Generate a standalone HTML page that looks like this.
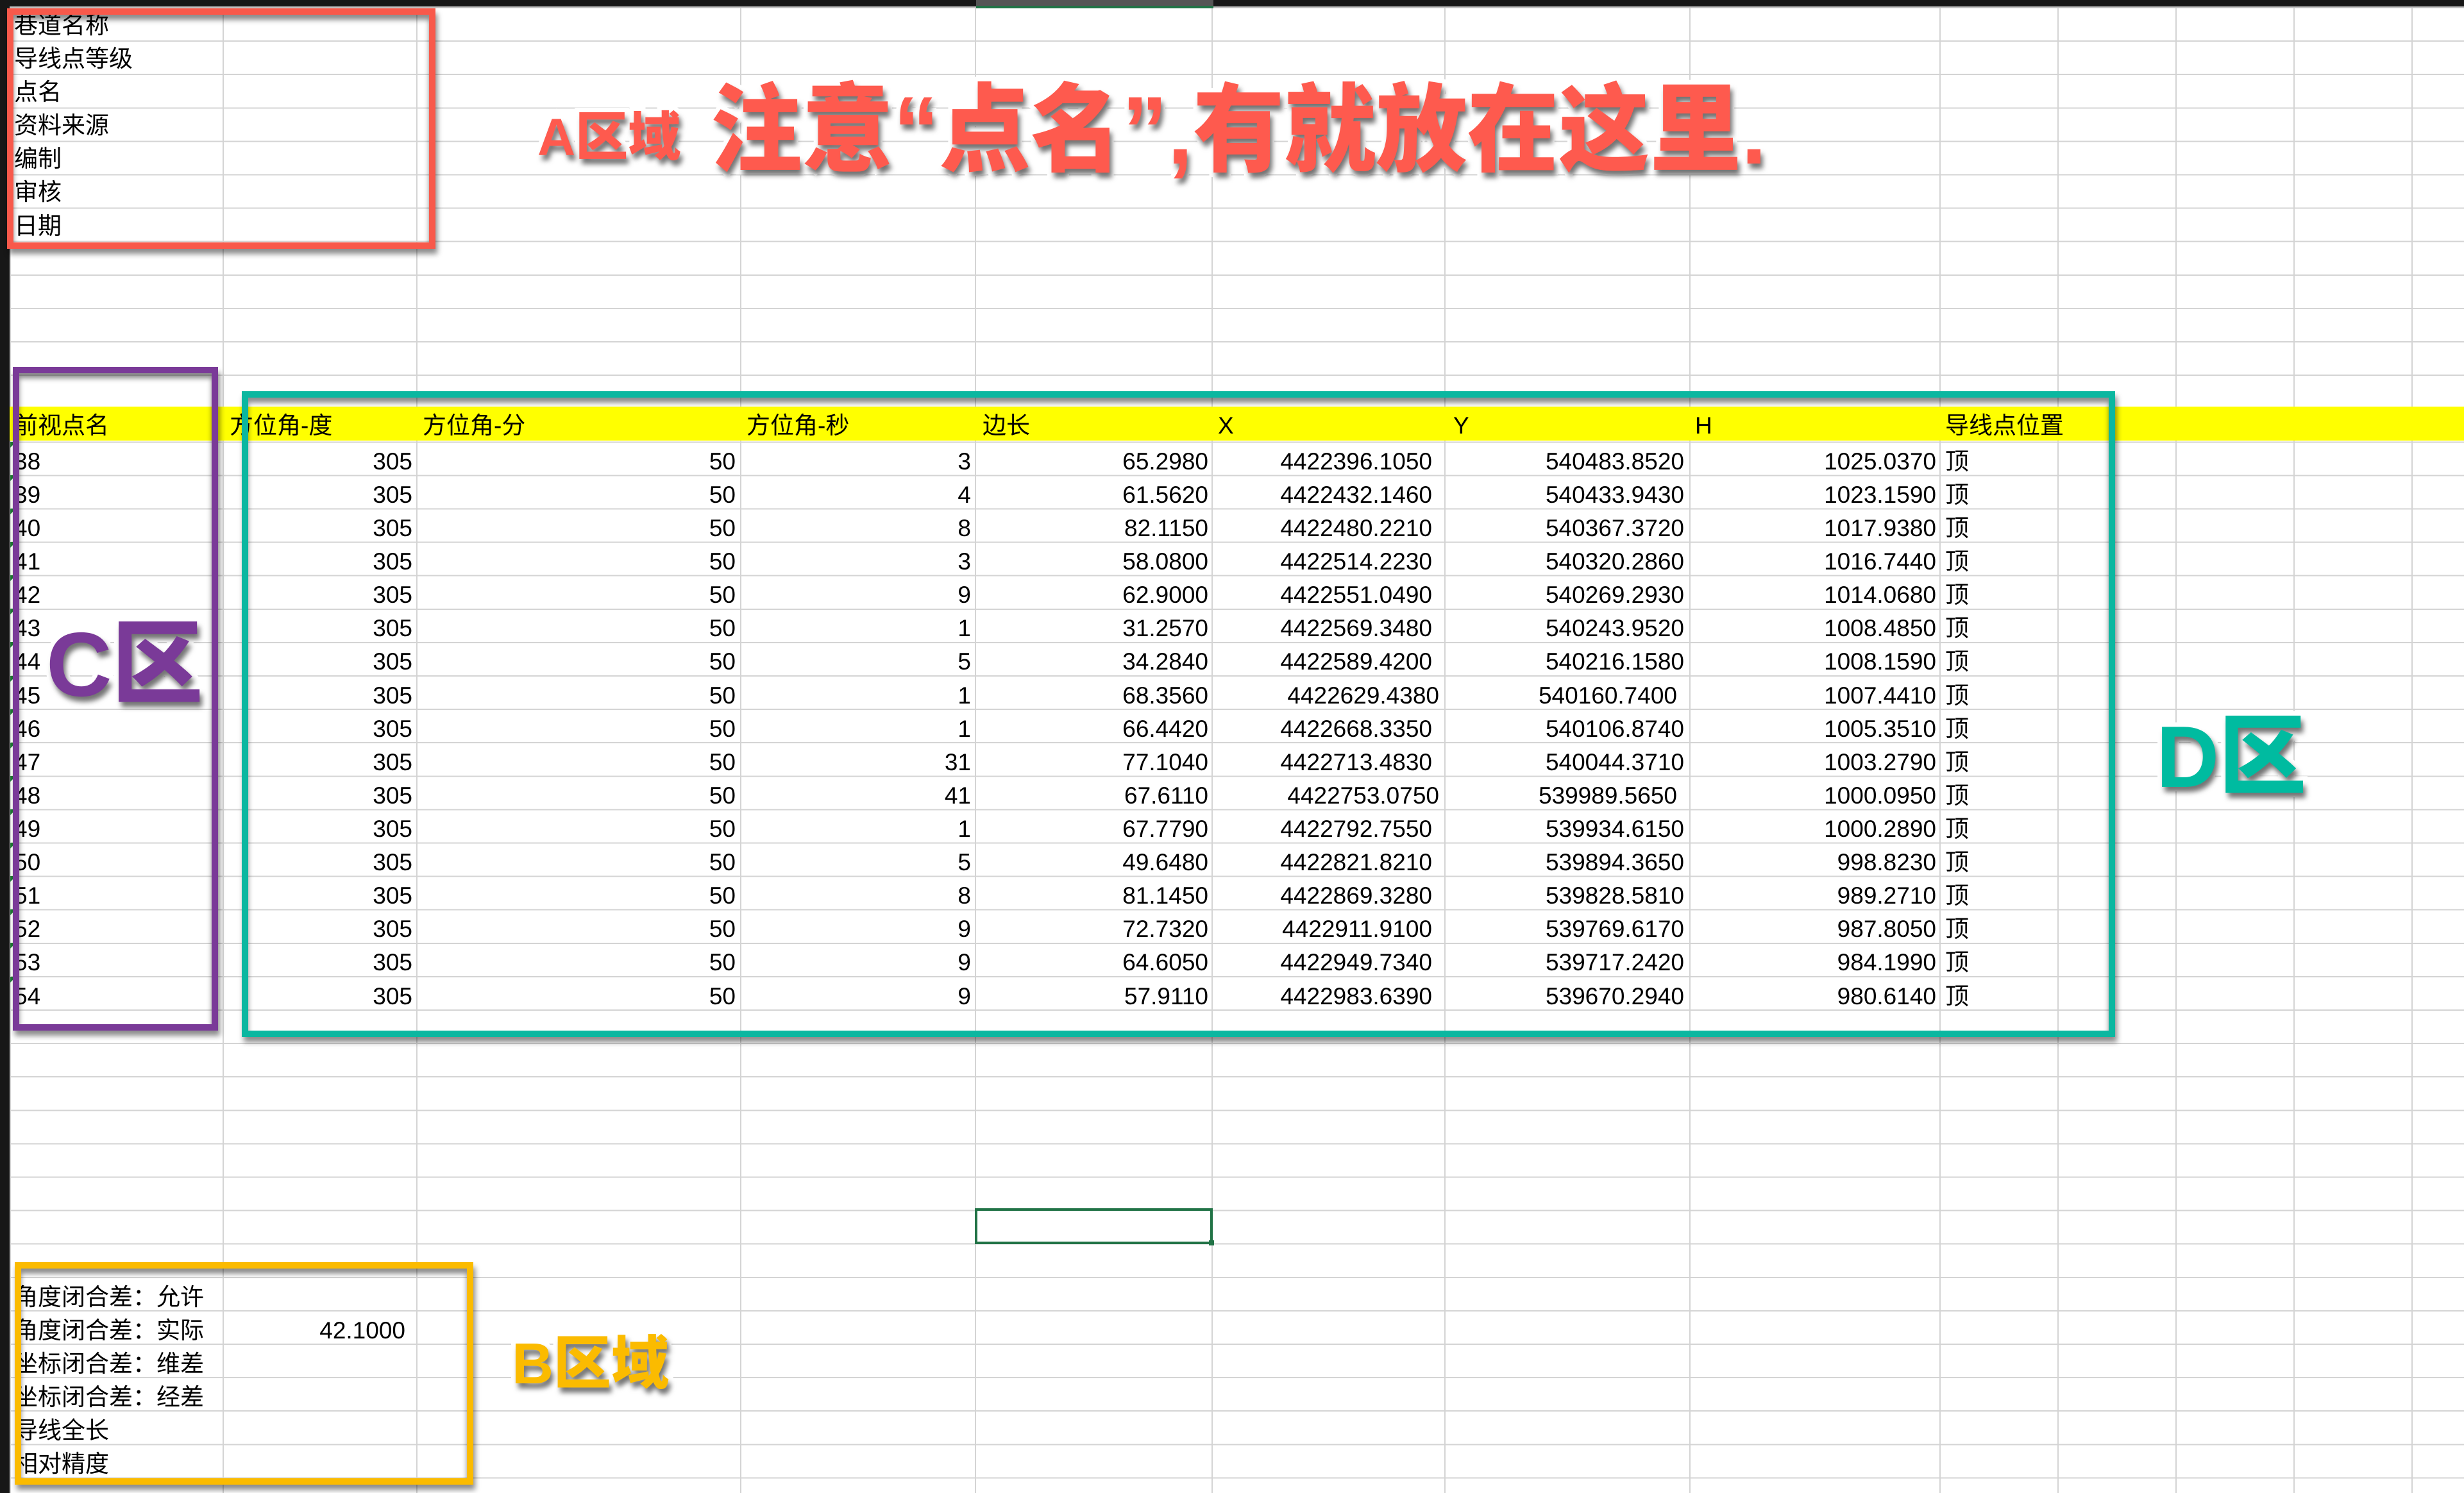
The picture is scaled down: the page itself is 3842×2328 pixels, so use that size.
<!DOCTYPE html>
<html><head><meta charset="utf-8">
<style>
*{margin:0;padding:0;box-sizing:border-box}
body{width:3842px;height:2328px;background:#fff;position:relative;overflow:hidden;font-family:"Liberation Sans","Noto Sans CJK SC",sans-serif;font-size:37px;color:#000}
.grid{position:absolute;left:15px;top:11px;right:0;bottom:0;background:repeating-linear-gradient(to bottom,#d4d4d4 0,#d4d4d4 2px,transparent 2px,transparent 52.1px)}
.vl{position:absolute;top:11px;bottom:0;width:2px;background:#d4d4d4}
.topbar{position:absolute;left:0;top:0;width:3842px;height:10px;background:#171717}
.topline{position:absolute;left:0;top:10px;width:3842px;height:2px;background:#bdbdbd}
.leftbar{position:absolute;left:0;top:0;width:15px;height:2328px;background:#171717}
.yellow{position:absolute;left:15px;top:634px;width:3827px;height:53px;background:#ffff00}
.r{position:absolute;left:0;height:52px;line-height:52px;white-space:nowrap;width:3842px}
.r span{position:absolute;top:0}
.ca{left:22px}
.cb{left:348px;width:302px;text-align:right;padding-right:7px}
.cc{left:650px;width:505px;text-align:right;padding-right:8px}
.cd{left:1155px;width:366px;text-align:right;padding-right:7px}
.ce{left:1521px;width:368px;text-align:right;padding-right:5px}
.cf{left:1889px;width:363px;text-align:right;padding-right:19px}
.cf.s{padding-right:8px}
.cg{left:2252px;width:382px;text-align:right;padding-right:8px}
.cg.s{padding-right:19px}
.ch{left:2634px;width:391px;text-align:right;padding-right:6px}
.ci{left:3033px}
.tri{position:absolute;left:16px;width:0;height:0;border-top:9px solid #1f7a35;border-right:9px solid transparent}
.box{position:absolute;border:10px solid;box-shadow:3px 8px 8px rgba(0,0,0,.45),inset 0 8px 8px rgba(0,0,0,.45)}
.ov{position:absolute;font-family:"Liberation Sans","Noto Sans CJK SC",sans-serif;font-weight:900;line-height:1;white-space:nowrap;-webkit-text-stroke:14px #fff;paint-order:stroke fill;text-shadow:4px 8px 8px rgba(0,0,0,.55)}
.sel{position:absolute;left:1520px;top:1884px;width:371px;height:56px;border:4px solid #217346}
</style></head><body>
<div class="grid"></div>
<div class="vl" style="left:15px"></div>
<div class="vl" style="left:347px"></div>
<div class="vl" style="left:649px"></div>
<div class="vl" style="left:1154px"></div>
<div class="vl" style="left:1520px"></div>
<div class="vl" style="left:1889px"></div>
<div class="vl" style="left:2252px"></div>
<div class="vl" style="left:2634px"></div>
<div class="vl" style="left:3024px"></div>
<div class="vl" style="left:3208px"></div>
<div class="vl" style="left:3392px"></div>
<div class="vl" style="left:3576px"></div>
<div class="vl" style="left:3760px"></div>
<div class="yellow"></div>
<div class="topbar"></div>
<div class="topline"></div>
<div style="position:absolute;left:1522px;top:0;width:370px;height:9px;background:#555"></div>
<div style="position:absolute;left:1522px;top:9px;width:370px;height:4px;background:#217346"></div>
<div class="leftbar"></div>

<!-- A area -->
<div class="r" style="top:14px"><span class="ca">巷道名称</span></div>
<div class="r" style="top:66px"><span class="ca">导线点等级</span></div>
<div class="r" style="top:118px"><span class="ca">点名</span></div>
<div class="r" style="top:170px"><span class="ca">资料来源</span></div>
<div class="r" style="top:222px"><span class="ca">编制</span></div>
<div class="r" style="top:274px"><span class="ca">审核</span></div>
<div class="r" style="top:327px"><span class="ca">日期</span></div>

<!-- header -->
<div class="r" style="top:638px"><span class="ca">前视点名</span><span style="left:358px">方位角-度</span><span style="left:659px">方位角-分</span><span style="left:1164px">方位角-秒</span><span style="left:1532px">边长</span><span style="left:1899px">X</span><span style="left:2266px">Y</span><span style="left:2643px">H</span><span style="left:3033px">导线点位置</span></div>

<!-- data -->
<div class="r" style="top:694px"><span class="ca">38</span><span class="cb">305</span><span class="cc">50</span><span class="cd">3</span><span class="ce">65.2980</span><span class="cf">4422396.1050</span><span class="cg">540483.8520</span><span class="ch">1025.0370</span><span class="ci">顶</span></div>
<div class="r" style="top:746px"><span class="ca">39</span><span class="cb">305</span><span class="cc">50</span><span class="cd">4</span><span class="ce">61.5620</span><span class="cf">4422432.1460</span><span class="cg">540433.9430</span><span class="ch">1023.1590</span><span class="ci">顶</span></div>
<div class="r" style="top:798px"><span class="ca">40</span><span class="cb">305</span><span class="cc">50</span><span class="cd">8</span><span class="ce">82.1150</span><span class="cf">4422480.2210</span><span class="cg">540367.3720</span><span class="ch">1017.9380</span><span class="ci">顶</span></div>
<div class="r" style="top:850px"><span class="ca">41</span><span class="cb">305</span><span class="cc">50</span><span class="cd">3</span><span class="ce">58.0800</span><span class="cf">4422514.2230</span><span class="cg">540320.2860</span><span class="ch">1016.7440</span><span class="ci">顶</span></div>
<div class="r" style="top:902px"><span class="ca">42</span><span class="cb">305</span><span class="cc">50</span><span class="cd">9</span><span class="ce">62.9000</span><span class="cf">4422551.0490</span><span class="cg">540269.2930</span><span class="ch">1014.0680</span><span class="ci">顶</span></div>
<div class="r" style="top:954px"><span class="ca">43</span><span class="cb">305</span><span class="cc">50</span><span class="cd">1</span><span class="ce">31.2570</span><span class="cf">4422569.3480</span><span class="cg">540243.9520</span><span class="ch">1008.4850</span><span class="ci">顶</span></div>
<div class="r" style="top:1006px"><span class="ca">44</span><span class="cb">305</span><span class="cc">50</span><span class="cd">5</span><span class="ce">34.2840</span><span class="cf">4422589.4200</span><span class="cg">540216.1580</span><span class="ch">1008.1590</span><span class="ci">顶</span></div>
<div class="r" style="top:1059px"><span class="ca">45</span><span class="cb">305</span><span class="cc">50</span><span class="cd">1</span><span class="ce">68.3560</span><span class="cf s">4422629.4380</span><span class="cg s">540160.7400</span><span class="ch">1007.4410</span><span class="ci">顶</span></div>
<div class="r" style="top:1111px"><span class="ca">46</span><span class="cb">305</span><span class="cc">50</span><span class="cd">1</span><span class="ce">66.4420</span><span class="cf">4422668.3350</span><span class="cg">540106.8740</span><span class="ch">1005.3510</span><span class="ci">顶</span></div>
<div class="r" style="top:1163px"><span class="ca">47</span><span class="cb">305</span><span class="cc">50</span><span class="cd">31</span><span class="ce">77.1040</span><span class="cf">4422713.4830</span><span class="cg">540044.3710</span><span class="ch">1003.2790</span><span class="ci">顶</span></div>
<div class="r" style="top:1215px"><span class="ca">48</span><span class="cb">305</span><span class="cc">50</span><span class="cd">41</span><span class="ce">67.6110</span><span class="cf s">4422753.0750</span><span class="cg s">539989.5650</span><span class="ch">1000.0950</span><span class="ci">顶</span></div>
<div class="r" style="top:1267px"><span class="ca">49</span><span class="cb">305</span><span class="cc">50</span><span class="cd">1</span><span class="ce">67.7790</span><span class="cf">4422792.7550</span><span class="cg">539934.6150</span><span class="ch">1000.2890</span><span class="ci">顶</span></div>
<div class="r" style="top:1319px"><span class="ca">50</span><span class="cb">305</span><span class="cc">50</span><span class="cd">5</span><span class="ce">49.6480</span><span class="cf">4422821.8210</span><span class="cg">539894.3650</span><span class="ch">998.8230</span><span class="ci">顶</span></div>
<div class="r" style="top:1371px"><span class="ca">51</span><span class="cb">305</span><span class="cc">50</span><span class="cd">8</span><span class="ce">81.1450</span><span class="cf">4422869.3280</span><span class="cg">539828.5810</span><span class="ch">989.2710</span><span class="ci">顶</span></div>
<div class="r" style="top:1423px"><span class="ca">52</span><span class="cb">305</span><span class="cc">50</span><span class="cd">9</span><span class="ce">72.7320</span><span class="cf">4422911.9100</span><span class="cg">539769.6170</span><span class="ch">987.8050</span><span class="ci">顶</span></div>
<div class="r" style="top:1475px"><span class="ca">53</span><span class="cb">305</span><span class="cc">50</span><span class="cd">9</span><span class="ce">64.6050</span><span class="cf">4422949.7340</span><span class="cg">539717.2420</span><span class="ch">984.1990</span><span class="ci">顶</span></div>
<div class="r" style="top:1528px"><span class="ca">54</span><span class="cb">305</span><span class="cc">50</span><span class="cd">9</span><span class="ce">57.9110</span><span class="cf">4422983.6390</span><span class="cg">539670.2940</span><span class="ch">980.6140</span><span class="ci">顶</span></div>

<div class="tri" style="top:689px"></div><div class="tri" style="top:741px"></div><div class="tri" style="top:793px"></div><div class="tri" style="top:845px"></div><div class="tri" style="top:897px"></div><div class="tri" style="top:949px"></div><div class="tri" style="top:1001px"></div><div class="tri" style="top:1054px"></div><div class="tri" style="top:1106px"></div><div class="tri" style="top:1158px"></div><div class="tri" style="top:1210px"></div><div class="tri" style="top:1262px"></div><div class="tri" style="top:1314px"></div><div class="tri" style="top:1366px"></div><div class="tri" style="top:1418px"></div><div class="tri" style="top:1470px"></div><div class="tri" style="top:1523px"></div>

<!-- B area -->
<div class="r" style="top:1997px"><span class="ca">角度闭合差：允许</span></div>
<div class="r" style="top:2049px"><span class="ca">角度闭合差：实际</span><span class="cb" style="padding-right:18px">42.1000</span></div>
<div class="r" style="top:2101px"><span class="ca">坐标闭合差：维差</span></div>
<div class="r" style="top:2153px"><span class="ca">坐标闭合差：经差</span></div>
<div class="r" style="top:2205px"><span class="ca">导线全长</span></div>
<div class="r" style="top:2257px"><span class="ca">相对精度</span></div>

<div class="sel"></div>
<div style="position:absolute;left:1885px;top:1934px;width:8px;height:8px;background:#217346"></div>

<!-- annotation boxes -->
<div class="box" style="left:11px;top:13px;width:668px;height:375px;border-color:#f8594b"></div>
<div class="box" style="left:20px;top:572px;width:320px;height:1035px;border-color:#7a3a98"></div>
<div class="box" style="left:377px;top:610px;width:2921px;height:1007px;border-color:#0bb7a0"></div>
<div class="box" style="left:23px;top:1968px;width:715px;height:347px;border-color:#fbbb00"></div>

<!-- overlay texts -->
<div class="ov" style="left:838px;top:174px;font-size:82px;color:#fe5a4e">A区域</div>
<div class="ov" style="left:1108px;top:128px;font-size:150px;color:#fe5a4e;transform:scaleX(0.95);transform-origin:left top">注意“点名”,有就放在这里.</div>
<div class="ov" style="left:72px;top:966px;font-size:142px;color:#7a3a98">C区</div>
<div class="ov" style="left:3362px;top:1112px;font-size:136px;color:#00bba0">D区</div>
<div class="ov" style="left:798px;top:2082px;font-size:90px;color:#fbbb00">B区域</div>
</body></html>
